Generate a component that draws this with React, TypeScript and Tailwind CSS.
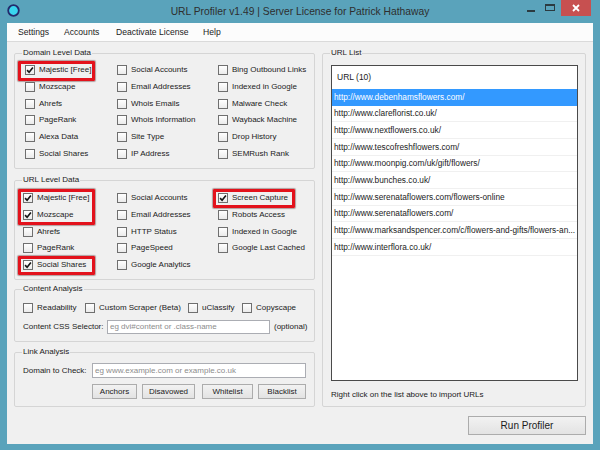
import React from 'react';

type Opt = { label: string; checked?: boolean };

const domainOpts: Opt[] = [
  { label: 'Majestic [Free]', checked: true },
  { label: 'Social Accounts' },
  { label: 'Bing Outbound Links' },
  { label: 'Mozscape' },
  { label: 'Email Addresses' },
  { label: 'Indexed in Google' },
  { label: 'Ahrefs' },
  { label: 'Whois Emails' },
  { label: 'Malware Check' },
  { label: 'PageRank' },
  { label: 'Whois Information' },
  { label: 'Wayback Machine' },
  { label: 'Alexa Data' },
  { label: 'Site Type' },
  { label: 'Drop History' },
  { label: 'Social Shares' },
  { label: 'IP Address' },
  { label: 'SEMRush Rank' },
];

const urlOpts: Opt[] = [
  { label: 'Majestic [Free]', checked: true },
  { label: 'Social Accounts' },
  { label: 'Screen Capture', checked: true },
  { label: 'Mozscape', checked: true },
  { label: 'Email Addresses' },
  { label: 'Robots Access' },
  { label: 'Ahrefs' },
  { label: 'HTTP Status' },
  { label: 'Indexed in Google' },
  { label: 'PageRank' },
  { label: 'PageSpeed' },
  { label: 'Google Last Cached' },
  { label: 'Social Shares', checked: true },
  { label: 'Google Analytics' },
];

const urls = [
  'http://www.debenhamsflowers.com/',
  'http://www.clareflorist.co.uk/',
  'http://www.nextflowers.co.uk/',
  'http://www.tescofreshflowers.com/',
  'http://www.moonpig.com/uk/gift/flowers/',
  'http://www.bunches.co.uk/',
  'http://www.serenataflowers.com/flowers-online',
  'http://www.serenataflowers.com/',
  'http://www.marksandspencer.com/c/flowers-and-gifts/flowers-an...',
  'http://www.interflora.co.uk/',
];

function Check({ checked }: { checked?: boolean }) {
  return (
    <span className="flex h-[10px] w-[10px] shrink-0 items-center justify-center border border-[#6f6f6f] bg-linear-to-b from-[#ffffff] to-[#ebebeb]">
      {checked && (
        <svg width="8" height="8" viewBox="0 0 8 8">
          <path d="M1.1 4.1 L3.1 6.3 L6.9 1.4" fill="none" stroke="#151515" strokeWidth="1.6" />
        </svg>
      )}
    </span>
  );
}

function Option({ label, checked }: Opt) {
  return (
    <div className="flex h-[16.67px] items-center gap-[4px] whitespace-nowrap">
      <Check checked={checked} />
      <span>{label}</span>
    </div>
  );
}

function Highlight({ className }: { className: string }) {
  return (
    <div
      className={`pointer-events-none absolute rounded-[1px] border-[3px] border-[#e3121c] shadow-[0_0_1px_1px_rgba(60,0,0,0.35)] ${className}`}
    />
  );
}

function Legend({ children }: { children: React.ReactNode }) {
  return <legend className="ml-[7px] px-[1px] text-[8px] leading-[10px]">{children}</legend>;
}

function WinButton({ children, className }: { children: React.ReactNode; className: string }) {
  return (
    <button
      className={`flex items-center justify-center border border-[#acacac] bg-linear-to-b from-[#f2f2f2] to-[#e3e3e3] text-[#1b1b1b] ${className}`}
    >
      {children}
    </button>
  );
}

export default function App() {
  return (
    <div className="flex h-[450px] w-[600px] flex-col bg-[#5aa3bb] font-['Liberation_Sans',Arial,sans-serif] text-[#1b1b1b]">
      {/* title bar */}
      <header className="grid h-[23px] grid-cols-[1fr_auto_1fr]">
        <div className="pl-[7px] pt-[4px]">
          <svg width="13" height="13" viewBox="0 0 13 13">
            <circle cx="6.5" cy="6.5" r="5.3" fill="#3ad5ee" stroke="#232a6c" strokeWidth="1.8" />
          </svg>
        </div>
        <div className="text-[10.3px] leading-[23px] text-[#2e2e2e]">
          URL Profiler v1.49 | Server License for Patrick Hathaway
        </div>
        <div className="flex items-start justify-end pr-[9px]">
          <span className="mt-[10px] h-[2px] w-[8px] bg-[#2b3a40]" />
          <span className="ml-[10px] mt-[4px] h-[7px] w-[10px] border border-t-2 border-[#2b3a40]" />
          <span className="ml-[6px] flex h-[16px] w-[30px] items-center justify-center bg-[#c75050]">
            <svg width="8" height="8" viewBox="0 0 8 8">
              <path d="M1 1 L7 7 M7 1 L1 7" stroke="#ffffff" strokeWidth="1.8" />
            </svg>
          </span>
        </div>
      </header>

      {/* client area */}
      <div className="mx-[7px] flex h-[421px] flex-col bg-[#f0f0f0]">
        <nav className="flex h-[19px] items-center border-b border-[#dadada] bg-[#fcfcfc] pl-[11px] text-[8.6px]">
          <span className="w-[46px]">Settings</span>
          <span className="w-[52px]">Accounts</span>
          <span className="w-[87px]">Deactivate License</span>
          <span>Help</span>
        </nav>

        <div className="flex flex-col px-[7px] pt-[6px] text-[8px]">
          <div className="flex gap-[7px]">
            {/* left column */}
            <div className="flex w-[301px] flex-col">
              <fieldset className="h-[121px] rounded-[2px] border border-[#d5d5d5]">
                <Legend>Domain Level Data</Legend>
                <div className="relative mt-[4px] grid grid-cols-[92px_101px_1fr] pl-[10px]">
                  {domainOpts.map((o) => (
                    <Option key={o.label} {...o} />
                  ))}
                  <Highlight className="left-[3px] top-[-1px] h-[20px] w-[77px]" />
                </div>
              </fieldset>

              <fieldset className="mt-[6px] h-[105px] rounded-[2px] border border-[#d5d5d5]">
                <Legend>URL Level Data</Legend>
                <div className="relative mt-[5px] grid grid-cols-[94px_101px_1fr] pl-[8px]">
                  {urlOpts.map((o) => (
                    <Option key={o.label} {...o} />
                  ))}
                  <Highlight className="left-[3px] top-[-1px] h-[36px] w-[77px]" />
                  <Highlight className="left-[198px] top-[-1px] h-[19px] w-[82px]" />
                  <Highlight className="left-[3px] top-[66px] h-[19px] w-[77px]" />
                </div>
              </fieldset>

              <fieldset className="mt-[4px] h-[58px] rounded-[2px] border border-[#d5d5d5]">
                <Legend>Content Analysis</Legend>
                <div className="mt-[6px] flex h-[16px] items-center pl-[8px]">
                  <div className="w-[62px]"><Option label="Readability" /></div>
                  <div className="w-[103px]"><Option label="Custom Scraper (Beta)" /></div>
                  <div className="w-[54px]"><Option label="uClassify" /></div>
                  <Option label="Copyscape" />
                </div>
                <div className="mt-[4px] flex h-[14px] items-center pl-[8px]">
                  <span className="w-[84px] whitespace-nowrap">Content CSS Selector:</span>
                  <div className="flex h-[14px] w-[163px] items-center border border-[#abadb3] bg-white pl-[2px] text-[#8c8c8c]">
                    eg dvi#content or .class-name
                  </div>
                  <span className="ml-[4px]">(optional)</span>
                </div>
              </fieldset>

              <fieldset className="mt-[5px] h-[60px] rounded-[2px] border border-[#d5d5d5]">
                <Legend>Link Analysis</Legend>
                <div className="mt-[6px] flex h-[15px] items-center pl-[8px]">
                  <span className="w-[69px] whitespace-nowrap">Domain to Check:</span>
                  <div className="flex h-[15px] w-[214px] items-center border border-[#abadb3] bg-white pl-[2px] text-[#8c8c8c]">
                    eg www.example.com or example.co.uk
                  </div>
                </div>
                <div className="mt-[6px] flex h-[15px] pl-[77px]">
                  <WinButton className="w-[45px]">Anchors</WinButton>
                  <WinButton className="ml-[5px] w-[53px]">Disavowed</WinButton>
                  <WinButton className="ml-[7px] w-[51px]">Whitelist</WinButton>
                  <WinButton className="ml-[5px] w-[48px]">Blacklist</WinButton>
                </div>
              </fieldset>
            </div>

            {/* right column */}
            <fieldset className="h-[359px] w-[264px] rounded-[2px] border border-[#d5d5d5]">
              <Legend>URL List</Legend>
              <div className="ml-[8px] mt-[7px] h-[316px] w-[247px] border border-[#4a4a4a] bg-white">
                <div className="flex h-[23px] items-center pl-[5px] text-[8.5px]">URL (10)</div>
                {urls.map((u, i) => (
                  <div
                    key={u}
                    className={`flex h-[16.67px] items-center whitespace-nowrap border-b pl-[2px] text-[8.3px] ${
                      i === 0 ? 'border-[#3399ff] bg-[#3399ff] text-white' : 'border-[#f0f0f0]'
                    }`}
                  >
                    {u}
                  </div>
                ))}
              </div>
              <div className="ml-[8px] mt-[9px] leading-[10px]">Right click on the list above to import URLs</div>
            </fieldset>
          </div>

          <div className="mt-[9px] flex justify-end">
            <WinButton className="h-[19px] w-[118px] text-[10px]">Run Profiler</WinButton>
          </div>
        </div>
      </div>
    </div>
  );
}
